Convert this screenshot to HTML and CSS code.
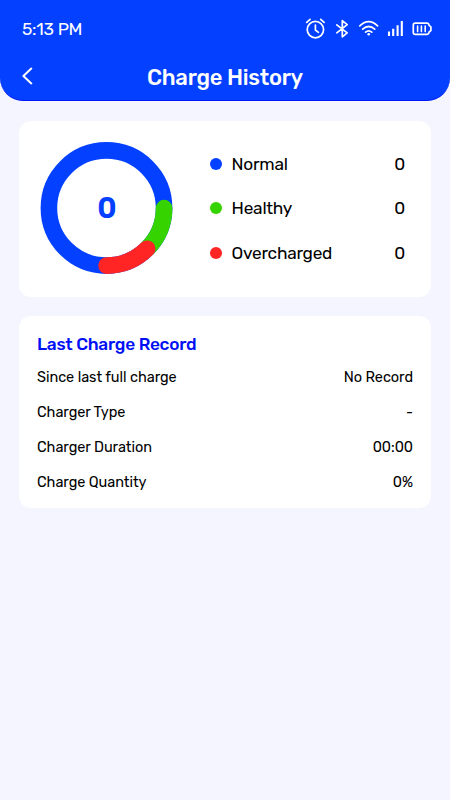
FILE: index.html
```html
<!DOCTYPE html>
<html lang="en">
  <head>
    <meta charset="utf-8">
    <meta name="viewport" content="width=device-width, initial-scale=1">
    <title>Charge History</title>
    <link rel="stylesheet" href="styles.css">
  </head>
  <body>
    <header class="header">
      <div class="status-bar">
        <span class="time">5:13 PM</span>
        <svg class="status-icons" width="128" height="22" viewBox="305 18 128 22">
          <!-- alarm -->
          <circle cx="315.4" cy="29.6" r="8.2" />
          <path d="M315.4 25v5l3 2.4M306.7 22.4l3.4-3M324.1 22.4l-3.4-3" />
          <!-- bluetooth -->
          <path d="M336.8 24.8l10.4 8-4.9 4V20.6l4.9 4-10.4 8.2" />
          <!-- wifi -->
          <path d="M359.8 25.8q8.9-8.2 17.8 0M362.7 29.2q6-5.4 12 0M365.6 32.2q3.1-2.6 6.2 0" />
          <circle class="fill" cx="368.7" cy="34.2" r="1.3" />
          <!-- signal -->
          <path class="bars" d="M389 31.5V36M393.2 28.8V36M397.6 25.2V36M401.8 21V36" />
          <!-- battery -->
          <path d="M415.2 23.2h11.6q2 0 2.3 2.2l1.8 1.4v3.8l-1.8 1.4q-.3 2.4-2.3 2.4h-11.6q-1.9 0-1.9-1.9v-7.4q0-1.9 1.9-1.9z" />
          <path class="cells" d="M417.6 26v5.6M421.4 26v5.6M425.2 26v5.6" />
        </svg>
      </div>
      <div class="nav-bar">
        <svg class="back" width="14" height="20" viewBox="0 0 14 20">
          <path d="M9.3 2.6L1.4 10l7.9 7.4" />
        </svg>
        <h1>Charge History</h1>
      </div>
    </header>

    <main>
      <section class="card summary">
        <svg class="donut" width="134" height="134" viewBox="0 0 134 134">
          <circle class="normal" cx="66.5" cy="67" r="57.6" />
          <path class="healthy" d="M124.1 67A57.6 57.6 0 0 1 107.2 107.7" />
          <path class="over" d="M107.2 107.7A57.6 57.6 0 0 1 66.5 124.6" />
          <text x="67" y="77">0</text>
        </svg>
        <ul class="legend">
          <li><i class="dot blue"></i><span>Normal</span><b>0</b></li>
          <li><i class="dot green"></i><span>Healthy</span><b>0</b></li>
          <li><i class="dot red"></i><span>Overcharged</span><b>0</b></li>
        </ul>
      </section>

      <section class="card record">
        <h2>Last Charge Record</h2>
        <dl>
          <div><dt>Since last full charge</dt><dd>No Record</dd></div>
          <div><dt>Charger Type</dt><dd>-</dd></div>
          <div><dt>Charger Duration</dt><dd>00:00</dd></div>
          <div><dt>Charge Quantity</dt><dd>0%</dd></div>
        </dl>
      </section>
    </main>
  </body>
</html>
```
FILE: styles.css
```css
* {
  box-sizing: border-box;
  margin: 0;
  padding: 0;
}

body {
  min-height: 100vh;
  background: #f5f5ff;
  color: #000;
  font-family: Rubik, Roboto, sans-serif;
}

.header {
  height: 101px;
  padding: 18px 17px 0 22px;
  background: #0340ff;
  border-bottom: 1px solid #0018f8;
  border-radius: 0 0 23px 23px;
  color: #fff;
}

.status-bar {
  display: flex;
  justify-content: space-between;
  align-items: center;
  height: 22px;
}

.time {
  font-size: 17.5px;
  letter-spacing: -0.3px;
}

.status-icons,
.back {
  display: block;
  fill: none;
  stroke: #fff;
  stroke-width: 1.7;
  stroke-linecap: round;
  stroke-linejoin: round;
}

.status-icons .fill {
  fill: #fff;
  stroke: none;
}

.status-icons .bars {
  stroke-width: 2.1;
  stroke-linecap: butt;
}

.status-icons .cells {
  stroke-width: 1.6;
}

.nav-bar {
  display: grid;
  grid-template-columns: 14px 1fr 14px;
  align-items: center;
  height: 32px;
  margin-top: 20px;
  padding-right: 5px;
}

.back {
  margin-bottom: 2px;
  stroke-width: 2;
}

h1 {
  padding-top: 2px;
  font-size: 22px;
  font-weight: 500;
  line-height: 32px;
  letter-spacing: -0.25px;
  text-align: center;
}

main {
  display: flex;
  flex-direction: column;
  gap: 19px;
  padding: 20px 19px;
}

.card {
  background: #fff;
  border-radius: 12px;
}

.summary {
  display: flex;
  align-items: flex-start;
  height: 176px;
  padding: 20px 26px 0 21px;
}

.donut {
  flex: none;
  fill: none;
  stroke-width: 16.6;
  stroke-linecap: round;
}

.normal {
  stroke: #0340ff;
}

.healthy {
  stroke: #35d400;
}

.over {
  stroke: #ff2525;
}

.donut text {
  fill: #0340ff;
  font-size: 29px;
  font-weight: 600;
  text-anchor: middle;
}

.legend {
  flex: 1;
  margin: 0.5px 0 0 35.6px;
  list-style: none;
}

.legend li {
  display: flex;
  align-items: center;
  height: 44.5px;
  font-size: 17.3px;
  letter-spacing: -0.25px;
}

.legend b {
  margin-left: auto;
  font-weight: 400;
}

.dot {
  width: 12px;
  height: 12px;
  margin-right: 10px;
  border-radius: 50%;
}

.blue {
  background: #0340ff;
}

.green {
  background: #35d400;
}

.red {
  background: #ff2525;
}

.record {
  height: 192px;
  padding: 17px 18px 0;
}

h2 {
  color: #0010f5;
  font-size: 17.3px;
  font-weight: 500;
  line-height: 22px;
  letter-spacing: -0.25px;
}

.record dl div {
  display: flex;
  justify-content: space-between;
  height: 35px;
  font-size: 14.5px;
  line-height: 45px;
  letter-spacing: -0.05px;
}
```
